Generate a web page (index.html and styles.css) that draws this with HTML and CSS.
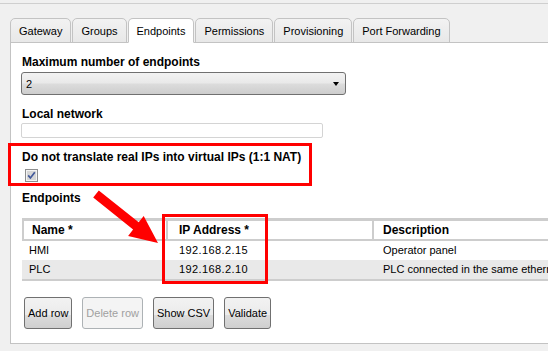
FILE: index.html
```html
<!doctype html>
<html lang="en">
  <head>
    <meta charset="UTF-8" />
    <meta name="viewport" content="width=device-width, initial-scale=1.0" />
    <title>Endpoints</title>
    <link rel="stylesheet" href="styles.css">
  </head>
  <body>
    <div class="page">
      <div class="topline"></div>

      <div class="tabs">
        <span class="tab">Gateway</span>
        <span class="tab">Groups</span>
        <span class="tab active">Endpoints</span>
        <span class="tab">Permissions</span>
        <span class="tab">Provisioning</span>
        <span class="tab">Port Forwarding</span>
      </div>

      <div class="panel">
        <div class="field">
          <div class="field-label">Maximum number of endpoints</div>
          <div class="select">
            <span>2</span>
            <span class="caret"></span>
          </div>
        </div>

        <div class="field">
          <div class="field-label">Local network</div>
          <div class="text-input"></div>
        </div>

        <div class="field">
          <div class="field-label">Do not translate real IPs into virtual IPs (1:1 NAT)</div>
          <svg class="checkbox" width="13" height="13" viewBox="0 0 13 13">
            <rect x="0.5" y="0.5" width="12" height="12" fill="#f4f4f4" stroke="#8e8f8f" />
            <rect x="2" y="2" width="9" height="9" fill="#d6d6d6" />
            <path d="M3.2 6.4 L5.4 9 L9.8 3.2" fill="none" stroke="#41589a" stroke-width="1.7" />
          </svg>
        </div>

        <div class="field field-endpoints">
          <div class="field-label">Endpoints</div>
          <div class="grid">
            <div class="grid-row grid-head">
              <span>Name *</span>
              <span>IP Address *</span>
              <span>Description</span>
            </div>
            <div class="grid-row">
              <span>HMI</span>
              <span class="ip">192.168.2.15</span>
              <span>Operator panel</span>
            </div>
            <div class="grid-row odd">
              <span>PLC</span>
              <span class="ip">192.168.2.10</span>
              <span>PLC connected in the same ethernet network</span>
            </div>
          </div>
        </div>

        <div class="buttons">
          <button class="btn">Add row</button>
          <button class="btn" disabled>Delete row</button>
          <button class="btn">Show CSV</button>
          <button class="btn">Validate</button>
        </div>
      </div>

      <!-- annotations drawn over the screenshot -->
      <svg class="marks" width="548" height="351" viewBox="0 0 548 351">
        <rect x="9.5" y="144.5" width="301" height="40" fill="none" stroke="#ff0000" stroke-width="3" />
        <rect x="163.5" y="215.5" width="103" height="67" fill="none" stroke="#ff0000" stroke-width="3" />
        <polygon points="98.8,190.4 138.7,222.3 143.7,215.9 158,243 128.1,235.9 133.1,229.5 93.2,197.6" fill="#ff0000" />
      </svg>
    </div>
  </body>
</html>
```

FILE: styles.css
```css
html,
body {
  margin: 0;
  height: 100%;
  overflow: hidden;
}

body {
  background: #f0f0f0;
  font: 11px "Liberation Sans", Arial, sans-serif;
  color: #000;
}

.page {
  position: relative;
  width: 548px;
  height: 351px;
}

.topline {
  height: 3px;
  border-bottom: 1px solid #cfcfcf;
}

.tabs {
  position: relative;
  z-index: 1;
  display: flex;
  margin: 14px 0 -1px 10px;
}

.tab {
  box-sizing: border-box;
  height: 25px;
  margin-right: 1px;
  padding: 1px 8px 0;
  line-height: 22px;
  border: 1px solid #c3c3c3;
  border-radius: 5px 5px 0 0;
  background: linear-gradient(#f2f2f2, #e8e8e8);
  white-space: nowrap;
}

.tab.active {
  background: #fff;
  border-bottom-color: #fff;
}

.panel {
  box-sizing: border-box;
  width: 720px;
  height: 302px;
  margin-left: 10px;
  padding: 0 0 0 11px;
  background: #fff;
  border: 1px solid #c3c3c3;
  border-right: 0;
}

.field {
  margin-top: 13px;
}

.field-label {
  font-size: 12px;
  font-weight: bold;
  line-height: 13px;
  white-space: nowrap;
}

.select {
  box-sizing: border-box;
  display: flex;
  align-items: center;
  justify-content: space-between;
  width: 325px;
  height: 23px;
  margin: 3px 0 0 -1px;
  padding: 0 6px 0 4px;
  border: 1px solid #707070;
  border-radius: 3px;
  background: linear-gradient(#f2f2f2 0%, #e9e9e9 48%, #dcdcdc 52%, #cdcdcd 100%);
}

.caret {
  width: 0;
  height: 0;
  border-left: 3.5px solid transparent;
  border-right: 3.5px solid transparent;
  border-top: 4px solid #000;
}

.text-input {
  box-sizing: border-box;
  width: 302px;
  height: 15px;
  margin: 2px 0 0 -1px;
  border: 1px solid #d4d4d4;
  border-radius: 2px;
  background: #fff;
}

.checkbox {
  display: block;
  margin: 5px 0 0 3px;
}

.field-endpoints {
  margin-top: 10px;
}

.grid {
  margin-top: 13px;
  border-bottom: 2px solid #cdcdcd;
}

.grid-row {
  display: grid;
  grid-template-columns: 144px 206px 1fr;
  height: 19px;
  line-height: 19px;
  white-space: nowrap;
}

.grid-row span {
  padding-left: 11px;
}

.grid-row span:first-child {
  padding-left: 7px;
}

.grid-row span:nth-child(2) {
  padding-left: 13px;
}

.grid-row .ip {
  letter-spacing: 0.4px;
}

.grid-row.odd {
  background: #e9e9e9;
}

.grid-head {
  box-sizing: border-box;
  height: 23px;
  line-height: 18px;
  font-size: 12px;
  font-weight: bold;
  border-top: 3px solid #cdcdcd;
  border-bottom: 2px solid #cdcdcd;
}

.grid-head span {
  border-left: 2px solid #cdcdcd;
  padding-left: 9px;
}

.grid-head span:first-child {
  padding-left: 8px;
}

.grid-head span:nth-child(2) {
  padding-left: 11px;
}

.buttons {
  display: flex;
  gap: 10px;
  margin: 16px 0 0 2px;
}

.btn {
  height: 32px;
  padding: 0 3px;
  font: 11px "Liberation Sans", Arial, sans-serif;
  color: #000;
  border: 1px solid #707070;
  border-radius: 3px;
  background: linear-gradient(#f2f2f2 0%, #ebebeb 55%, #dcdcdc 57%, #cfcfcf 100%);
}

.btn:disabled {
  color: #a0a0a0;
  border-color: #adb2b5;
  background: #f4f4f4;
}

.marks {
  position: absolute;
  top: 0;
  left: 0;
  pointer-events: none;
}
```
